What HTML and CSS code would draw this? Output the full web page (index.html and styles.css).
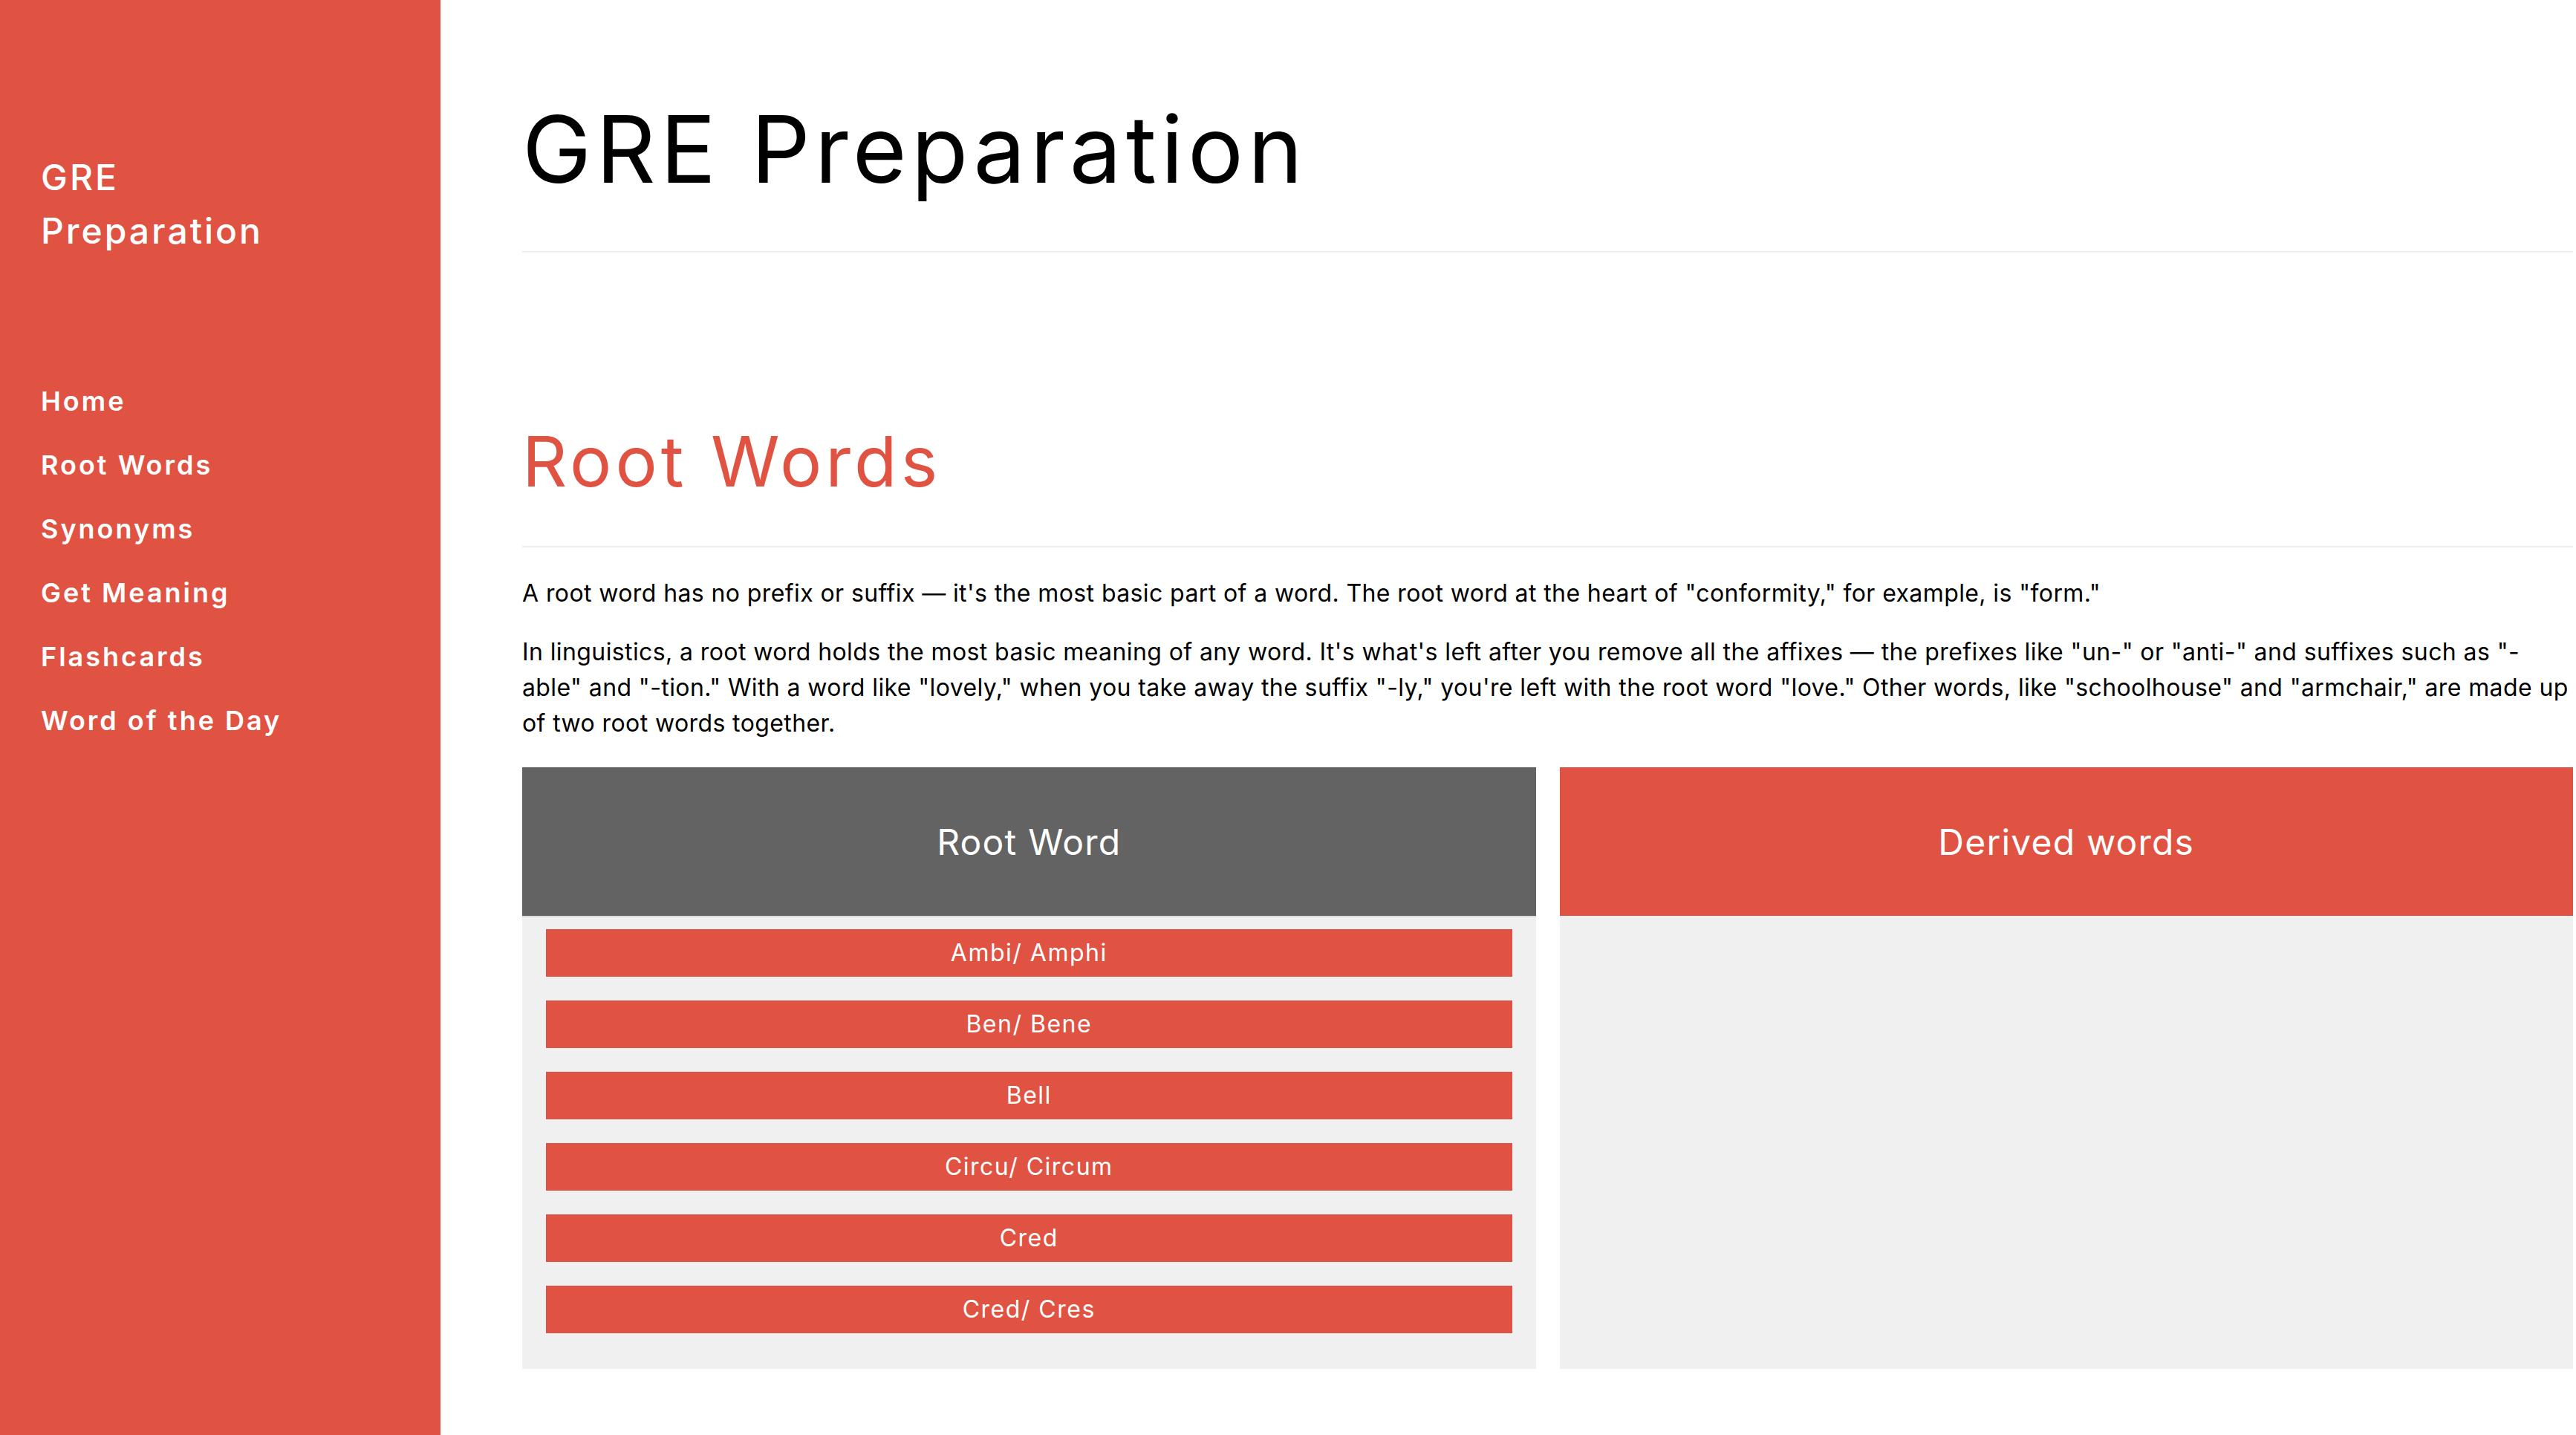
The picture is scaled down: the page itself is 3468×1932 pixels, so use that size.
FILE: index.html
```html
<!DOCTYPE html>
<html lang="en">
<head>
<meta charset="utf-8">
<title>GRE Preparation</title>
<link rel="stylesheet" href="styles.css">
</head>
<body>
<aside class="sidebar">
  <div class="brand">GRE<br>Preparation</div>
  <nav class="nav">
    <a href="#">Home</a>
    <a href="#">Root Words</a>
    <a href="#">Synonyms</a>
    <a href="#">Get Meaning</a>
    <a href="#">Flashcards</a>
    <a href="#">Word of the Day</a>
  </nav>
</aside>
<main class="main">
  <header class="page-head">
    <h1 class="page-title">GRE Preparation</h1>
  </header>
  <section class="section">
    <h2 class="section-title">Root Words</h2>
    <p class="text">A root word has no prefix or suffix — it's the most basic part of a word. The root word at the heart of "conformity," for example, is "form."</p>
    <p class="text">In linguistics, a root word holds the most basic meaning of any word. It's what's left after you remove all the affixes — the prefixes like "un-" or "anti-" and suffixes such as "-able" and "-tion." With a word like "lovely," when you take away the suffix "-ly," you're left with the root word "love." Other words, like "schoolhouse" and "armchair," are made up of two root words together.</p>
    <div class="table">
      <div class="col">
        <div class="col-head gray">Root Word</div>
        <div class="col-body list">
          <div class="item">Ambi/ Amphi</div>
          <div class="item">Ben/ Bene</div>
          <div class="item">Bell</div>
          <div class="item">Circu/ Circum</div>
          <div class="item">Cred</div>
          <div class="item">Cred/ Cres</div>
        </div>
      </div>
      <div class="col">
        <div class="col-head red">Derived words</div>
        <div class="col-body"></div>
      </div>
    </div>
  </section>
</main>
</body>
</html>
```
FILE: styles.css
```css
* { box-sizing: border-box; }
html, body { margin: 0; padding: 0; }
body {
  display: flex;
  min-height: 100vh;
  font-family: Inter, "Noto Sans", sans-serif;
  color: #000;
  background: #fff;
}
.sidebar {
  width: 593px;
  flex: 0 0 593px;
  background: #e05343;
  color: #fff;
  padding: 203px 55px 0;
}
.brand {
  font-size: 48px;
  line-height: 72px;
  font-weight: 500;
  letter-spacing: 3px;
}
.nav {
  display: flex;
  flex-direction: column;
  margin-top: 150px;
}
.nav a {
  color: #fff;
  text-decoration: none;
  font-size: 36px;
  line-height: 86px;
  font-weight: 600;
  letter-spacing: 3px;
}
.main {
  flex: 1;
  padding: 0 4px 0 110px;
  min-width: 0;
}
.page-head {
  padding-top: 126px;
  padding-bottom: 62px;
  border-bottom: 2px solid #eeeeee;
}
.page-title {
  margin: 0;
  font-size: 125px;
  line-height: 150px;
  font-weight: 400;
  letter-spacing: 6px;
}
.section { padding-top: 225px; }
.section-title {
  margin: 0;
  font-size: 94px;
  line-height: 112px;
  font-weight: 400;
  letter-spacing: 5px;
  color: #e05343;
  padding-bottom: 58px;
  border-bottom: 2px solid #eeeeee;
}
.text {
  margin: 38px 0 0;
  font-size: 32px;
  line-height: 48px;
  letter-spacing: 0.4px;
}
.text + .text { margin-top: 31px; }
.table {
  display: grid;
  grid-template-columns: 1fr 1fr;
  column-gap: 32px;
  margin-top: 35px;
}
.col {
  display: flex;
  flex-direction: column;
}
.col-head {
  height: 200px;
  display: flex;
  align-items: center;
  justify-content: center;
  color: #fff;
  font-size: 48px;
  letter-spacing: 1.2px;
}
.gray { background: #636363; }
.red { background: #e05343; }
.col-body {
  flex: 1;
  background: #f0f0f0;
}
.list {
  border-top: 2px solid #dddddd;
  padding: 16px 32px 16px;
}
.item {
  height: 64px;
  line-height: 64px;
  margin-bottom: 32px;
  background: #e05343;
  color: #fff;
  text-align: center;
  font-size: 32px;
  letter-spacing: 1.5px;
}
```
